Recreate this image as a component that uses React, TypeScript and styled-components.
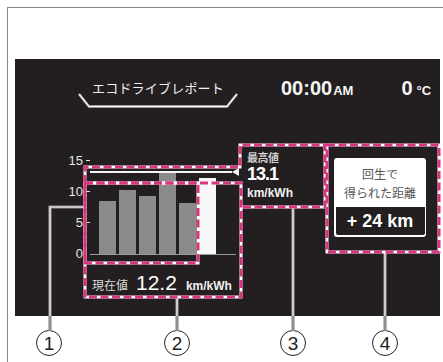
import styled, { createGlobalStyle } from 'styled-components';

const GlobalStyle = createGlobalStyle`
  html, body {
    margin: 0;
    padding: 0;
    background: #fff;
  }
  body {
    font-family: 'Liberation Sans', 'Noto Sans CJK JP', sans-serif;
  }
`;

const SCALE = 6.2; // px per km/kWh
const history = [8.5, 10.3, 9.4, 13.1, 8.2];
const current = 12.2;
const best = 13.1;
const axis = ['15', '10', '5', '0'];
const markers = [
  { n: '1', gap: 21 },
  { n: '2', gap: 102 },
  { n: '3', gap: 90 },
  { n: '4', gap: 66 },
];

const App = () => {
  return (
    <Page>
      <GlobalStyle />
      <Frame>
        <Panel>
          <Header>
            <Title>
              <TitleText>エコドライブレポート</TitleText>
              <svg width='160' height='15' viewBox='0 0 160 15'>
                <polyline
                  points='1,1 11,13.5 149,13.5 159,1'
                  fill='none'
                  stroke='#bdbdbd'
                  strokeWidth='2.4'
                />
                <polyline
                  points='1,1 11,13.5 149,13.5 159,1'
                  fill='none'
                  stroke='#fff'
                  strokeWidth='1'
                />
              </svg>
            </Title>
            <Clock>
              00:00<Small>AM</Small>
            </Clock>
            <Temp>
              0<Small $gap={4}>°C</Small>
            </Temp>
          </Header>

          <Body>
            <ChartCol>
              <ChartRow>
                <YAxis>
                  {axis.map((label) => (
                    <AxisRow key={label}>
                      <AxisLabel>{label}</AxisLabel>
                      <Tick $hidden={label === '0'} />
                    </AxisRow>
                  ))}
                </YAxis>
                <Plot>
                  {history.map((v, i) => (
                    <Bar key={i} style={{ height: v * SCALE }} />
                  ))}
                  <Bar $current style={{ height: current * SCALE }} />
                  <BestLine style={{ bottom: best * SCALE }}>
                    <Arrow />
                  </BestLine>
                </Plot>
              </ChartRow>
              <CurrentRow>
                <CurrentLabel>現在値</CurrentLabel>
                <CurrentValue>12.2</CurrentValue>
                <Unit>km/kWh</Unit>
              </CurrentRow>
            </ChartCol>

            <BestCol>
              <BestLabel>最高値</BestLabel>
              <BestValue>13.1</BestValue>
              <Unit $small>km/kWh</Unit>
            </BestCol>

            <DistCol>
              <Card>
                <CardTop>
                  <CardLine>回生で</CardLine>
                  <CardLine>得られた距離</CardLine>
                </CardTop>
                <CardBottom>+ 24 km</CardBottom>
              </Card>
            </DistCol>
          </Body>
        </Panel>

        <Markers>
          {markers.map((m) => (
            <Marker key={m.n} $gap={m.gap}>
              {m.n}
            </Marker>
          ))}
        </Markers>
      </Frame>

      <Overlay width='443' height='362' viewBox='0 0 443 362'>
        <g fill='none' strokeLinecap='butt'>
          {/* leader lines */}
          <g stroke='#8f8f8f' strokeWidth='3.2'>
            <path d='M85,207 H50 V331' />
            <path d='M177,297 V331' />
            <path d='M293,207 V331' />
            <path d='M385,252 V331' />
          </g>
          <g stroke='#fff' strokeWidth='1.1'>
            <path d='M85,207 H50 V316' />
            <path d='M177,297 V316' />
            <path d='M293,207 V316' />
            <path d='M385,252 V316' />
          </g>
          {/* dashed callout boxes */}
          <g stroke='#fff' strokeWidth='3'>
            <path d='M85,183 V167 H240 V145 H325 V207 H240' />
            <rect x='85' y='183' width='113' height='80' />
            <rect x='85' y='183' width='156' height='114' />
            <rect x='327' y='145' width='112' height='107' />
          </g>
          <g stroke='#d8357f' strokeWidth='3' strokeDasharray='8 3.5'>
            <path d='M85,183 V167 H240 V145 H325 V207 H240' />
            <rect x='85' y='183' width='113' height='80' />
            <rect x='85' y='183' width='156' height='114' />
            <rect x='327' y='145' width='112' height='107' />
          </g>
        </g>
      </Overlay>
    </Page>
  );
};

export default App;

const Page = styled.div`
  position: relative;
  width: 443px;
  height: 362px;
  overflow: hidden;
  background: #fff;
`;

const Frame = styled.div`
  box-sizing: border-box;
  margin: 7px 0 0 7px;
  height: 355px;
  border-top: 1px solid #8a8a8a;
  border-left: 1px solid #8a8a8a;
  padding: 51px 0 0 7px;
`;

const Panel = styled.div`
  width: 425px;
  height: 257px;
  background-color: #231f20;
  color: #f4f4f4;
  display: flex;
  flex-direction: column;
`;

const Header = styled.div`
  display: flex;
  align-items: flex-start;
  height: 86px;
  padding-left: 63px;
`;

const Title = styled.div`
  width: 160px;
  margin-top: 22px;
  display: flex;
  flex-direction: column;
  align-items: center;

  svg {
    display: block;
    margin-top: -2px;
  }
`;

const TitleText = styled.div`
  font-family: 'Noto Sans CJK JP', sans-serif;
  font-size: 13px;
  line-height: 14px;
  color: #f0f0f0;
  letter-spacing: 0.2px;
`;

const Clock = styled.div`
  margin-left: 43px;
  margin-top: 19px;
  font-size: 20px;
  line-height: 20px;
  font-weight: 700;
  color: #f4f4f4;
`;

const Temp = styled(Clock)`
  margin-left: 48px;
`;

const Small = styled.span<{ $gap?: number }>`
  font-size: 13px;
  font-weight: 700;
  margin-left: ${({ $gap }) => $gap ?? 1}px;
`;

const Body = styled.div`
  display: flex;
  align-items: flex-start;
`;

const ChartCol = styled.div`
  box-sizing: border-box;
  width: 225px;
  padding-left: 48px;
`;

const ChartRow = styled.div`
  display: flex;
  align-items: flex-start;
`;

const YAxis = styled.div`
  width: 27px;
  display: flex;
  flex-direction: column;
`;

const AxisRow = styled.div`
  height: 31px;
  display: flex;
  align-items: center;
`;

const AxisLabel = styled.span`
  width: 20px;
  text-align: right;
  font-size: 13px;
  color: #e6e6e6;
`;

const Tick = styled.span<{ $hidden?: boolean }>`
  width: 4px;
  height: 1.5px;
  margin-left: 3px;
  background: #e6e6e6;
  visibility: ${({ $hidden }) => ($hidden ? 'hidden' : 'visible')};
`;

const Plot = styled.div`
  position: relative;
  margin-top: 6px;
  width: 137px;
  height: 103px;
  border-bottom: 1.5px solid #9c9c9c;
  display: flex;
  align-items: flex-end;
  gap: 3px;
  padding-left: 9px;
  box-sizing: content-box;
`;

const Bar = styled.div<{ $current?: boolean }>`
  width: 17px;
  background: ${({ $current }) => ($current ? '#f7f7f7' : '#8b8b8b')};
`;

const BestLine = styled.div`
  position: absolute;
  left: 0;
  width: 142px;
  height: 1.5px;
  background: #f4f4f4;
`;

const Arrow = styled.div`
  position: absolute;
  right: -7px;
  top: -3.5px;
  width: 0;
  height: 0;
  border-top: 4.25px solid transparent;
  border-bottom: 4.25px solid transparent;
  border-right: 7px solid #f4f4f4;
`;

const CurrentRow = styled.div`
  display: flex;
  align-items: baseline;
  margin-top: 2px;
  padding-left: 29px;
  line-height: 24px;
`;

const CurrentLabel = styled.span`
  font-family: 'Noto Sans CJK JP', sans-serif;
  font-size: 12px;
  color: #dcdcdc;
`;

const CurrentValue = styled.span`
  font-size: 21px;
  margin-left: 8px;
  color: #fff;
`;

const Unit = styled.span<{ $small?: boolean }>`
  display: block;
  font-size: 12px;
  font-weight: 700;
  color: #f0f0f0;
  margin-left: ${({ $small }) => ($small ? 0 : 9)}px;
  margin-top: ${({ $small }) => ($small ? 2 : 0)}px;
  line-height: 14px;
`;

const BestCol = styled.div`
  box-sizing: border-box;
  width: 85px;
  padding: 4px 0 0 7px;
`;

const BestLabel = styled.div`
  font-family: 'Noto Sans CJK JP', sans-serif;
  font-size: 11px;
  line-height: 16px;
  font-weight: 700;
  color: #cfcfcf;
  letter-spacing: -0.5px;
`;

const BestValue = styled.div`
  font-size: 18px;
  font-weight: 700;
  line-height: 19px;
  letter-spacing: -1px;
  color: #fff;
`;

const DistCol = styled.div`
  box-sizing: border-box;
  width: 113px;
  padding: 13px 0 0 9px;
`;

const Card = styled.div`
  width: 92px;
  border-radius: 3px;
  overflow: hidden;
  background: #fff;
`;

const CardTop = styled.div`
  height: 49px;
  box-sizing: border-box;
  padding-top: 6px;
  display: flex;
  flex-direction: column;
  align-items: center;
`;

const CardLine = styled.div`
  font-family: 'Noto Sans CJK JP', sans-serif;
  font-size: 12px;
  line-height: 19px;
  color: #555;
`;

const CardBottom = styled.div`
  box-sizing: border-box;
  height: 28px;
  margin: 0 1.5px 1.5px;
  background: #231f20;
  border-radius: 0 0 2px 2px;
  display: flex;
  align-items: center;
  justify-content: center;
  font-size: 18px;
  font-weight: 700;
  color: #fff;
`;

const Markers = styled.div`
  display: flex;
  margin-top: 14px;
`;

const Marker = styled.div<{ $gap: number }>`
  box-sizing: border-box;
  flex-shrink: 0;
  width: 26px;
  height: 26px;
  margin-left: ${({ $gap }) => $gap}px;
  border: 1.5px solid #222;
  border-radius: 50%;
  display: flex;
  align-items: center;
  justify-content: center;
  font-size: 19px;
  line-height: 1;
  color: #222;
`;

const Overlay = styled.svg`
  position: absolute;
  left: 0;
  top: 0;
  pointer-events: none;
`;
